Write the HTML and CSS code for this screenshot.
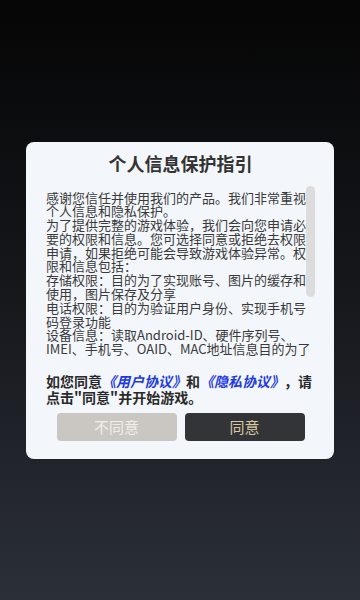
FILE: index.html
```html
<!DOCTYPE html>
<html lang="zh-CN">
<head>
  <meta charset="UTF-8" />
  <meta name="viewport" content="width=device-width, initial-scale=1.0"/>
  <title>个人信息保护指引</title>
  <link rel="stylesheet" href="styles.css">
</head>
<body>

  <div class="dialog">
    <h2 class="title">个人信息保护指引</h2>

    <div class="scroll-wrap">
      <div class="scroll-body">
        <p>感谢您信任并使用我们的产品。我们非常重视个人信息和隐私保护。</p>
        <p>为了提供完整的游戏体验，我们会向您申请必要的权限和信息。您可选择同意或拒绝去权限申请，如果拒绝可能会导致游戏体验异常。权限和信息包括：</p>
        <p>存储权限：目的为了实现账号、图片的缓存和使用，图片保存及分享</p>
        <p>电话权限：目的为验证用户身份、实现手机号码登录功能</p>
        <p>设备信息：读取Android-ID、硬件序列号、IMEI、手机号、OAID、MAC地址信息目的为了识别设备，保障账号安全及防沉迷系统正常运行。</p>
        <p>我们会严格按照法律法规要求保护您的个人信息，未经您的同意不会向第三方提供。</p>
      </div>
      <div class="thumb"></div>
    </div>

    <p class="agree-tip">
      如您同意<a href="#">《用户协议》</a>和<a href="#">《隐私协议》</a>，请点击"同意"并开始游戏。
    </p>

    <div class="btn-group">
      <button type="button" class="btn refuse">不同意</button>
      <button type="button" class="btn accept">同意</button>
    </div>
  </div>

</body>
</html>
```

FILE: styles.css
```css
* {
  margin: 0;
  padding: 0;
  box-sizing: border-box;
  font-family: "Noto Sans CJK SC", "Noto Sans", sans-serif;
}

html, body {
  height: 100%;
}

body {
  background: linear-gradient(to bottom, #050505 0%, #16181c 50%, #2b2f38 100%);
  display: flex;
  align-items: center;
  justify-content: center;
}

.dialog {
  width: 308px;
  background-color: #f3f7fb;
  border-radius: 8px;
  padding: 8px 19px 18px 20px;
}

.title {
  text-align: center;
  font-size: 18px;
  line-height: 26px;
  font-weight: bold;
  color: #333;
}

.scroll-wrap {
  position: relative;
  margin-top: 10px;
  height: 171px;
}

.scroll-body {
  height: 100%;
  overflow-y: auto;
  scrollbar-width: none;
  padding: 5px 3px 0 0;
  font-size: 13px;
  line-height: 13.8px;
  color: #3a3a3a;
  text-spacing-trim: space-all;
}

.scroll-body::-webkit-scrollbar {
  display: none;
}

.thumb {
  position: absolute;
  top: 0;
  right: 0;
  width: 9px;
  height: 111px;
  border-radius: 5px;
  background-color: #dcdcdc;
}

.agree-tip {
  margin-top: 16px;
  font-size: 14px;
  line-height: 16px;
  font-weight: bold;
  color: #2a2a2a;
  text-spacing-trim: space-all;
}

.agree-tip a {
  color: #1f3ae0;
  font-style: italic;
  text-decoration: none;
}

.btn-group {
  display: flex;
  justify-content: center;
  gap: 8px;
  margin-top: 8px;
}

.btn {
  width: 120px;
  height: 28px;
  border: none;
  border-radius: 4px;
  font-size: 15px;
  cursor: pointer;
}

.refuse {
  background-color: #cac7c2;
  color: #efeeeb;
}

.accept {
  background-color: #333437;
  color: #d6c99f;
}
```
